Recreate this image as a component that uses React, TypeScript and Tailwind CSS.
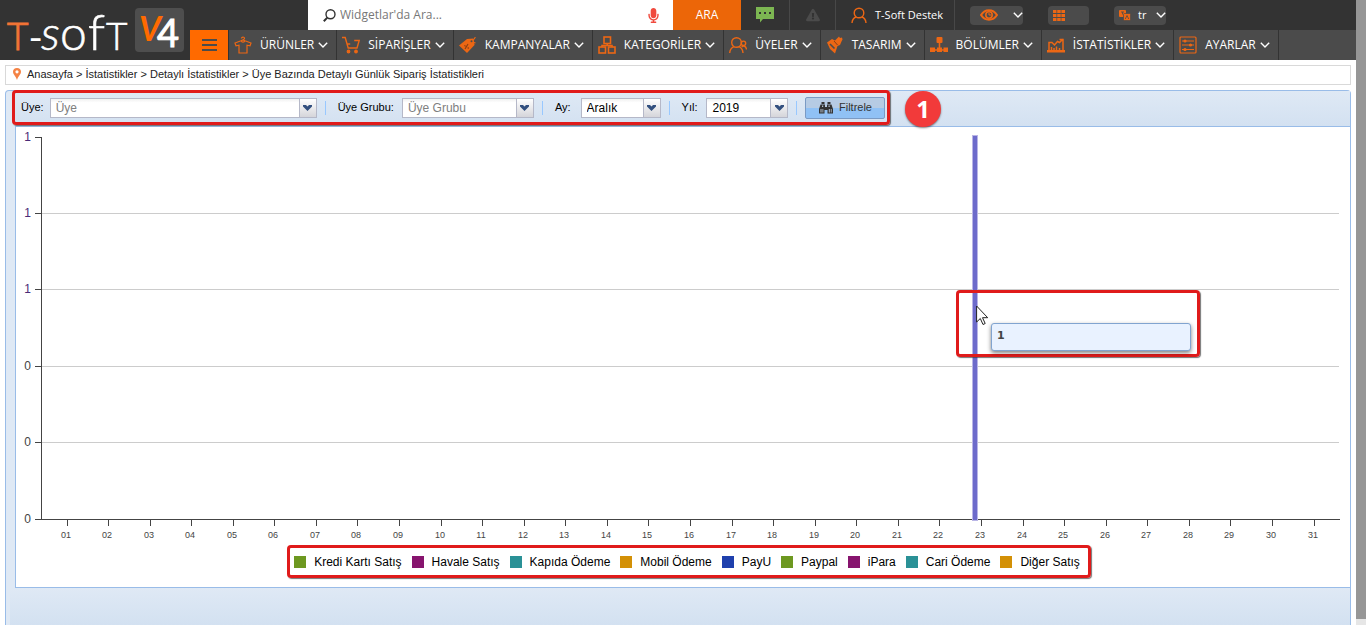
import React from "react";
import { FaExclamationTriangle, FaMicrophone } from "react-icons/fa";

const ORANGE = "#ec6714";

const iconProps = {
  width: 18,
  height: 18,
  viewBox: "0 0 18 18",
  fill: "none",
  stroke: ORANGE,
  strokeWidth: 1.2,
  className: "shrink-0",
  "aria-hidden": true,
} as const;

function ShirtIcon() {
  return (
    <svg {...iconProps}>
      <path d="M7.5 2.6c0-2 3-2 3-.2 0 1-1.500 1-1.500 2.200M7 4.800 1 7l1 2.800 3-.6v7.800h8V9.200l3 .6L17 7l-6-2.200M7 4.800c.8 1.800 3.200 1.800 4 0M7 4.800l2-.8 2 .8" />
    </svg>
  );
}

function CartIcon() {
  return (
    <svg {...iconProps}>
      <path d="M0 1.500h3.200l3 10.500h8.800l2.200-7.500h-5M5.200 8h3" strokeWidth="1.400" />
      <circle cx="6.500" cy="15.500" r="1.300" fill={ORANGE} />
      <circle cx="14" cy="15.500" r="1.300" fill={ORANGE} />
    </svg>
  );
}

function TagIcon() {
  return (
    <svg {...iconProps}>
      <path d="M0 9.500 8 3l6.500-.5L15.500 9 8 17z" fill={ORANGE} stroke="none" />
      <path d="M12.500 5.500c1.500-1 3.500-2.500 3.800-4.500M12 5.500l4.500 1.500" />
      <circle cx="12.500" cy="5.300" r="1" fill="#4b4b4b" stroke="none" />
      <path d="m6 13 3-5M5.500 9.300l1 1M8.700 11.500l1 1" stroke="#8a3f14" />
    </svg>
  );
}

function BoxesIcon() {
  return (
    <svg {...iconProps} strokeWidth={1.6}>
      <rect x="6" y="1" width="6.500" height="6.500" />
      <rect x="1" y="11" width="6.500" height="6" />
      <rect x="10.500" y="11" width="6.500" height="6" />
      <path d="M9.200 7.500v2M4 11V9.500h10V11" />
    </svg>
  );
}

function MembersIcon() {
  return (
    <svg {...iconProps} strokeWidth={1.4}>
      <circle cx="7.500" cy="6.500" r="4.800" />
      <path d="M.7 17c.3-3.800 2-5.500 4-6.200M14 17c-.3-3.800-1.800-5.500-3.700-6.200" />
      <circle cx="14.500" cy="7.300" r="2.200" />
      <path d="M12.700 11c1.500-1.800 4.500-1 4.800 2.500" />
    </svg>
  );
}

function BrushIcon() {
  return (
    <svg {...iconProps}>
      <path
        d="m0 6.500 5-3.500 3 1.500L12 .5 13 2l2-.5.500 2-1 2-1.500 3.500L10.500 10 8 17.500 3 13z"
        transform="translate(1 0)"
        fill={ORANGE}
        stroke="none"
      />
      <path d="m4 8 4.500 4.500" stroke="#4b4b4b" strokeWidth="1.600" />
      <path d="m8 5 3.500 4" stroke="#8a3f14" strokeWidth="1" />
    </svg>
  );
}

function TreeIcon() {
  return (
    <svg {...iconProps}>
      <rect x="6.500" y="1" width="6" height="6" rx="1" fill={ORANGE} stroke="none" />
      <path d="M9.500 6v7M3 14h13" strokeWidth="1.600" />
      <path d="M0 11.500h5V16H0zM7 11.500h5V16H7zM13.500 11.500h4.500V16h-4.500z" fill={ORANGE} stroke="none" />
    </svg>
  );
}

function StatsIcon() {
  return (
    <svg {...iconProps} strokeWidth={1.5}>
      <path d="M0 14h18v2.500H0z" fill={ORANGE} stroke="none" />
      <path d="M2 14V6.500h3L7.500 9l3-3.500 2 1L16 3M16 14V3M12.500 3.500H16V6" />
      <path d="M4.500 14v-3M7 14v-2M9.500 14v-3.500M12.500 14v-2" />
    </svg>
  );
}

function SlidersIcon() {
  return (
    <svg {...iconProps}>
      <rect x="1" y="1" width="16" height="16" rx="1" />
      <path d="M3 5h12M3 9h12M3 13.500h12" />
      <circle cx="6" cy="5" r="1" fill={ORANGE} />
      <circle cx="11.500" cy="9" r="1" fill={ORANGE} />
      <circle cx="6" cy="13.500" r="1" fill={ORANGE} />
    </svg>
  );
}

function BinocularsIcon() {
  return (
    <svg width="14" height="13" viewBox="0 0 14 13" fill="#333" aria-hidden>
      <path d="M2.500 1h3v2h-3zM8.500 1h3v2h-3zM1.500 3.500h4.500V6h2V3.500h4.500L14 8v4.500H8.500V9h-3v3.500H0V8z" />
      <path d="M1.500 8h1v3.500h-1zM3.500 8h.8v3.500h-.8zM9.800 8h1v3.500h-1zM11.800 8h.8v3.500h-.8zM3 4.500h1.200v1.500H3zM9.500 4.500h1.200v1.500H9.500z" fill="#b9c6d6" />
    </svg>
  );
}

function Chevron() {
  return (
    <svg width="10" height="6" viewBox="0 0 10 6" fill="none" stroke="#fff" strokeWidth="1.400" className="shrink-0" aria-hidden>
      <path d="m.8.8 4.200 4.200L9.200.8" />
    </svg>
  );
}

const MENU = [
  { label: "ÜRÜNLER", Icon: ShirtIcon },
  { label: "SİPARİŞLER", Icon: CartIcon },
  { label: "KAMPANYALAR", Icon: TagIcon },
  { label: "KATEGORİLER", Icon: BoxesIcon },
  { label: "ÜYELER", Icon: MembersIcon },
  { label: "TASARIM", Icon: BrushIcon },
  { label: "BÖLÜMLER", Icon: TreeIcon },
  { label: "İSTATİSTİKLER", Icon: StatsIcon },
  { label: "AYARLAR", Icon: SlidersIcon },
];

function Logo() {
  return (
    <a href="#" aria-label="T-Soft V4" className="w-[190px] shrink-0">
      <svg width="190" height="60" viewBox="0 0 190 60" fontFamily="Lato, sans-serif" fontWeight="300">
        <text x="7" y="50" fontSize="37" fill="#f37435" stroke="#f37435">T</text>
        <g fill="#fff" stroke="#fff" strokeWidth=".6">
          <text x="29" y="50" fontSize="36" strokeWidth="1.200">-</text>
          <text x="41" y="50" fontSize="48" fontStyle="italic">s</text>
          <text x="60" y="50" fontSize="48">o</text>
          <text x="88" y="50" fontSize="50">f</text>
          <text x="106" y="50" fontSize="37">T</text>
        </g>
        <rect x="135" y="8" width="49" height="44" rx="4" fill="#4e4e4e" />
        <text x="139" y="41" fontSize="34" fontStyle="italic" fontWeight="700" fill="#ff6a00">V</text>
        <text x="157" y="47" fontSize="38" fontWeight="400" fill="#fff" stroke="#fff">4</text>
      </svg>
    </a>
  );
}

function Header() {
  return (
    <header className="flex h-[60px] shrink-0 bg-[#333] font-['Open_Sans',sans-serif] text-xs text-white">
      <Logo />
      <div className="flex min-w-0 flex-1 flex-col">
        <div className="flex h-[30px] pl-[118px]">
          <div className="flex w-[365px] items-center bg-white pr-3 pl-[15px]">
            <svg width="13" height="13" viewBox="0 0 13 13" fill="none" stroke="#333" strokeWidth="1.400" aria-hidden>
              <circle cx="7.500" cy="5.300" r="4.500" />
              <path d="M4.300 8.600.8 12.200" strokeWidth="2" />
            </svg>
            <input
              type="text"
              aria-label="Widget ara"
              placeholder="Widgetlar'da Ara..."
              className="ml-1 min-w-0 flex-1 bg-transparent text-xs text-gray-700 outline-none placeholder:text-[#777]"
            />
            <button type="button" aria-label="Sesli ara">
              <FaMicrophone size={15} color="#f04a3e" />
            </button>
          </div>
          <button type="button" className="w-[68px] bg-[#ec6608]">ARA</button>
          <button type="button" aria-label="Mesajlar" className="flex w-[49px] items-center justify-center border-r border-[#484848]">
            <svg width="18" height="16" viewBox="0 0 18 16" aria-hidden>
              <path d="M0 0h18v12H7l-3 3.500V12H0z" fill="#7cb652" />
              <path d="M3 5h2v2H3zM8 5h2v2H8zM13 5h2v2h-2z" fill="#333" />
            </svg>
          </button>
          <button type="button" aria-label="Uyarılar" className="flex w-[46px] items-center justify-center border-r border-[#484848]">
            <FaExclamationTriangle size={14} color="#4b4b4b" />
          </button>
          <button type="button" className="flex w-[119px] items-center gap-2 border-r border-[#484848] pl-[15px] text-[11px]">
            <svg width="16" height="17" viewBox="0 0 16 17" fill="none" stroke={ORANGE} strokeWidth="1.400" aria-hidden>
              <circle cx="8" cy="6" r="4.800" />
              <path d="M1 16c.2-3 1.500-5 4-6M15 16c-.2-3-1.500-5-4-6" />
            </svg>
            T-Soft Destek
          </button>
          <div className="flex items-center gap-[25px] pl-[15px] text-[11px]">
            <button type="button" aria-label="Görünüm" className="flex h-[19px] w-[53px] items-center justify-between rounded-sm bg-[#4b4b4b] pl-[10px]">
              <svg width="18" height="12" viewBox="0 0 18 12" fill="none" stroke={ORANGE} strokeWidth="2" aria-hidden>
                <path d="M1 6c4-6.300 12-6.300 16 0-4 6.300-12 6.300-16 0z" />
                <circle cx="9" cy="6" r="3.200" strokeWidth="1.600" />
                <path d="M9 4v2h2" strokeWidth="1" />
              </svg>
              <Chevron />
            </button>
            <button type="button" aria-label="Uygulamalar" className="flex h-[19px] w-[41px] items-center rounded-sm bg-[#4b4b4b] pl-[5px]">
              <svg width="12" height="11" viewBox="0 0 12 11" fill={ORANGE} aria-hidden>
                <path d="M0 0h3.500v3H0zM4.200 0h3.500v3H4.200zM8.400 0H12v3H8.400zM0 4h3.500v3H0zM4.200 4h3.500v3H4.200zM8.400 4H12v3H8.400zM0 8h3.500v3H0zM4.200 8h3.500v3H4.200zM8.400 8H12v3H8.400z" />
              </svg>
            </button>
            <button type="button" className="flex h-[19px] w-[52px] items-center rounded-sm bg-[#4b4b4b] pl-[5px]">
              <svg width="12" height="11" viewBox="0 0 12 11" aria-hidden>
                <rect width="7" height="7" rx="1" fill={ORANGE} />
                <rect x="4.500" y="3.500" width="7" height="7" rx="1" fill={ORANGE} stroke="#4b4b4b" strokeWidth=".7" />
                <path d="m6.300 9 1.700-3.500L9.700 9M2 2h3M3.500 2v2.500" stroke="#4b4b4b" strokeWidth=".8" fill="none" />
              </svg>
              <span className="mr-auto ml-[7px]">tr</span>
              <Chevron />
            </button>
          </div>
        </div>

        <nav className="flex h-[30px] bg-[#4b4b4b]">
          <button type="button" aria-label="Menü" className="flex w-[39px] flex-col items-center justify-center gap-[3px] border-r border-[#333] bg-[#ff6a00]">
            <span className="h-[2px] w-[15px] bg-[#4b4b4b]" />
            <span className="h-[2px] w-[15px] bg-[#4b4b4b]" />
            <span className="h-[2px] w-[15px] bg-[#4b4b4b]" />
          </button>
          {MENU.map(({ label, Icon }) => (
            <a key={label} href="#" className="flex items-center border-r border-[#333] pr-2 pl-[5px] whitespace-nowrap">
              <Icon />
              <span className="mr-1 ml-2">{label}</span>
              <Chevron />
            </a>
          ))}
        </nav>
      </div>
    </header>
  );
}

function Breadcrumb() {
  const crumbs = ["Anasayfa", "İstatistikler", "Detaylı İstatistikler", "Üye Bazında Detaylı Günlük Sipariş İstatistikleri"];
  return (
    <nav aria-label="Konum" className="flex h-5 items-center border border-[#d9d9d9] bg-white pb-0.5 pl-[7px] text-[11px] text-[#222]">
      <svg width="8" height="12" viewBox="0 0 8 12" className="mr-1.5" aria-hidden>
        <path d="M4 0C1.500 0 0 1.700 0 3.800 0 6.500 3 8.500 4 12c1-3.500 4-5.500 4-8.200C8 1.700 6.500 0 4 0z" fill="#f58345" />
        <circle cx="4" cy="3.800" r="1.600" fill="#fff" />
      </svg>
      {crumbs.map((crumb, i) => (
        <React.Fragment key={crumb}>
          {i > 0 && <span className="whitespace-pre"> &gt; </span>}
          <a href="#">{crumb}</a>
        </React.Fragment>
      ))}
    </nav>
  );
}

function Arrow() {
  return (
    <svg width="9" height="6" viewBox="0 0 9 6" fill="#33507f" aria-hidden>
      <path d="M0 0h3l1.500 1.500L6 0h3v1.500L4.500 6 0 1.500z" />
    </svg>
  );
}

const TRIGGER =
  "flex w-[17px] shrink-0 items-center justify-center border-l border-[#b5b8c8] bg-linear-to-b from-white to-[#d5d5da]";
const FIELD =
  "relative flex h-5 border border-[#b5b8c8] bg-linear-to-b from-[#f0f0f0] to-white to-20% text-xs";

function ComboInput({ id, placeholder, width }: { id: string; placeholder: string; width: string }) {
  return (
    <div className={`${FIELD} ${width}`}>
      <input
        id={id}
        type="text"
        placeholder={placeholder}
        className="min-w-0 flex-1 bg-transparent pl-[5px] outline-none placeholder:text-[#808080]"
      />
      <button type="button" aria-label={`${placeholder} listesi`} className={TRIGGER}>
        <Arrow />
      </button>
    </div>
  );
}

function ComboSelect({ id, value, width }: { id: string; value: string; width: string }) {
  return (
    <div className={`${FIELD} ${width}`}>
      <select id={id} defaultValue={value} className="min-w-0 flex-1 appearance-none bg-transparent pl-[5px] text-black outline-none">
        <option>{value}</option>
      </select>
      <span className={TRIGGER}>
        <Arrow />
      </span>
    </div>
  );
}

function Separator() {
  return <span className="mr-3 ml-2 h-[14px] w-px bg-[#98c8ff]" />;
}

const MARK = "rounded border-3 border-[#e01b1b] shadow-[1px_1px_1px_rgba(60,60,60,0.7)]";

function FilterBar() {
  return (
    <form className="relative flex h-[35px] items-center bg-linear-to-b from-[#dfe9f5] to-[#d3e1f1] pb-0.5 pl-[6px] text-[11px]">
      <label htmlFor="member" className="mr-1.5">Üye:</label>
      <ComboInput id="member" placeholder="Üye" width="w-[267px]" />
      <Separator />
      <label htmlFor="group" className="mr-2">Üye Grubu:</label>
      <ComboInput id="group" placeholder="Üye Grubu" width="w-[132px]" />
      <Separator />
      <label htmlFor="month" className="mr-[10px]">Ay:</label>
      <ComboSelect id="month" value="Aralık" width="w-[80px]" />
      <Separator />
      <label htmlFor="year" className="mr-[9px]">Yıl:</label>
      <ComboSelect id="year" value="2019" width="w-[82px]" />
      <span className="mx-2 h-[14px] w-px bg-[#98c8ff]" />
      <button
        type="button"
        className="flex h-[22px] w-20 items-center justify-center gap-1.5 rounded-xs border border-[#7a9ac4] bg-linear-to-b from-[#b6cbe4] from-50% to-[#90c1f5] to-50% text-[#333]"
      >
        <BinocularsIcon />
        Filtrele
      </button>
      <span className={`pointer-events-none absolute -top-px -left-[3px] h-[35px] w-[878px] ${MARK}`} />
      <span className="absolute top-0 left-[890px] flex size-9 items-center justify-center rounded-full bg-[#f23a3a] font-['Open_Sans',sans-serif] text-2xl font-bold text-white shadow-[0_1px_2px_rgba(0,0,0,0.5)]">
        1
      </span>
    </form>
  );
}

const DAYS = Array.from({ length: 31 }, (_, i) => String(i + 1).padStart(2, "0"));
const Y_TICKS = [
  { y: 10, label: "1" },
  { y: 86, label: "1" },
  { y: 162, label: "1" },
  { y: 239, label: "0" },
  { y: 315, label: "0" },
  { y: 392, label: "0" },
];
const dayX = (i: number) => Math.floor(51 + i * 41.57);

function Chart() {
  return (
    <div className="relative">
      <svg viewBox="0 0 1334 418" className="block w-full" fontFamily="'Liberation Sans', Arial, sans-serif" shapeRendering="crispEdges">
        {Y_TICKS.map(({ y, label }, i) => (
          <g key={y}>
            {i > 0 && i < 5 && <rect x="26" y={y} width="1297" height="1" fill="#ccc" />}
            <rect x="19" y={y} width="7" height="1" fill="#444" />
            <text x="15" y={y + 4} fontSize="12" textAnchor="end" fill={i < 3 ? "#4a2a78" : "#444"}>
              {label}
            </text>
          </g>
        ))}
        <rect x="25" y="10" width="1" height="383" fill="#444" />
        <rect x="19" y="392" width="1305" height="1" fill="#444" />
        {DAYS.map((day, i) => (
          <g key={day}>
            <rect x={dayX(i)} y="393" width="1" height="6" fill="#444" />
            <text x={dayX(i) - 1} y="411" fontSize="9" textAnchor="middle" fill="#444">
              {day}
            </text>
          </g>
        ))}
        <rect x="956" y="8" width="6" height="386" fill="#b9b5e6" />
        <rect x="957" y="9" width="4" height="384" fill="#6d6bcb" />
      </svg>

      <div className={`absolute top-[39%] left-[940px] h-[67px] w-[244px] ${MARK}`}>
        <svg width="13" height="21" viewBox="0 0 13 21" className="absolute top-3 left-[17px]" aria-hidden>
          <path d="M.6 1v16l3.700-3.500 2.700 6 2.200-1-2.700-5.800h5.200z" fill="#fff" stroke="#222" />
        </svg>
        <div
          role="tooltip"
          className="absolute top-[30px] left-8 flex h-7 w-[200px] items-center rounded-[3px] border border-[#81a4d0] bg-[#e9f2ff] pb-0.5 pl-[5px] font-['DejaVu_Sans',sans-serif] text-[11px] font-bold text-[#444] shadow-[0_2px_4px_rgba(0,0,0,0.5)]"
        >
          1
        </div>
      </div>
    </div>
  );
}

const LEGEND = [
  { label: "Kredi Kartı Satış", color: "bg-[#6d9820]" },
  { label: "Havale Satış", color: "bg-[#87146e]" },
  { label: "Kapıda Ödeme", color: "bg-[#2a9196]" },
  { label: "Mobil Ödeme", color: "bg-[#d39006]" },
  { label: "PayU", color: "bg-[#1f40ad]" },
  { label: "Paypal", color: "bg-[#6d9820]" },
  { label: "iPara", color: "bg-[#87146e]" },
  { label: "Cari Ödeme", color: "bg-[#2a9196]" },
  { label: "Diğer Satış", color: "bg-[#d39006]" },
];

function Legend() {
  return (
    <div className="flex justify-center pl-3">
      <ul className={`flex h-[33px] items-center gap-[10px] pr-2 pl-1 text-xs ${MARK}`}>
        {LEGEND.map(({ label, color }) => (
          <li key={label} className="flex items-center gap-2 whitespace-nowrap">
            <span className={`size-3 ${color}`} />
            {label}
          </li>
        ))}
      </ul>
    </div>
  );
}

export default function App() {
  return (
    <div className="flex min-h-screen bg-white font-['Liberation_Sans',Arial,sans-serif] text-black">
      <div className="flex min-w-0 flex-1 flex-col">
        <Header />
        <main className="flex flex-1 flex-col gap-[5px] pt-[5px] pr-[5px] pl-[5px]">
          <Breadcrumb />
          <div className="flex flex-1 flex-col rounded-t border border-b-0 border-[#99bce8] bg-[#dfe9f5] pl-[9px]">
            <FilterBar />
            <section aria-label="Günlük sipariş grafiği" className="-mr-px border border-[#99bce8] bg-white pb-[9px]">
              <Chart />
              <Legend />
            </section>
            <div className="-ml-[5px] flex-1 bg-linear-to-b from-[#dfe9f5] to-[#d3e1f1]" />
          </div>
        </main>
      </div>
      <div className="flex w-[10px] shrink-0 flex-col bg-[#e6e6e6] pb-1.5">
        <div className="flex-1 bg-[#969696]" />
      </div>
    </div>
  );
}
